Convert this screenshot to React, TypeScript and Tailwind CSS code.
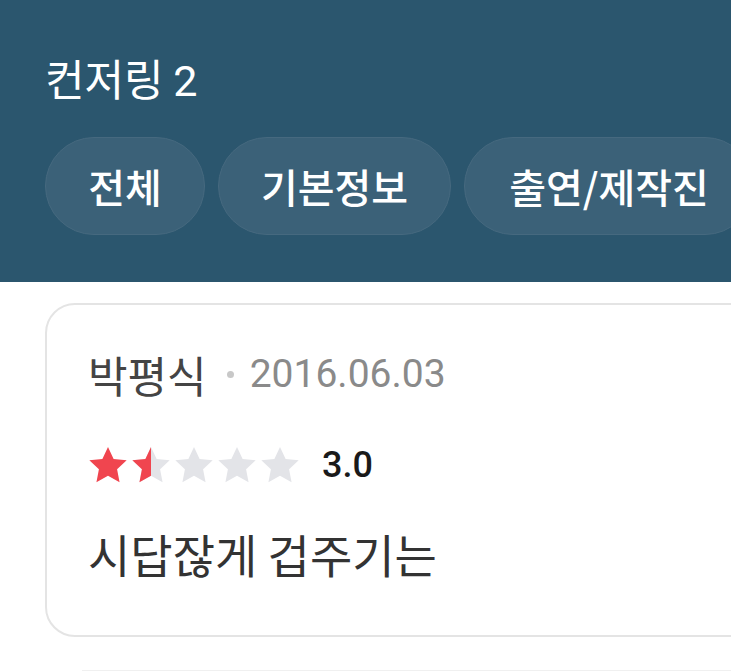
import React from "react";

const STAR =
  "M12 0.6l3.4 7.2 7.9.9-5.8 5.4 1.5 7.8L12 18l-7 3.9 1.5-7.8L.7 8.7l7.9-.9z";

const Star = ({ fill, id }: { fill: "full" | "half" | "empty"; id: string }) => (
  <svg width="40" height="38" viewBox="0 0 24 23" className="block">
    <defs>
      <clipPath id={id}>
        <rect x="0" y="0" width="12" height="23" />
      </clipPath>
    </defs>
    <path d={STAR} fill={fill === "full" ? "#f0454f" : "#e3e4e8"} />
    {fill === "half" && <path d={STAR} fill="#f0454f" clipPath={`url(#${id})`} />}
  </svg>
);

export default function App() {
  const font = { fontFamily: '"Noto Sans CJK KR", Roboto, sans-serif' };
  const roboto = { fontFamily: 'Roboto, "Noto Sans CJK KR", sans-serif' };
  return (
    <div className="w-[731px] h-[672px] overflow-hidden bg-white" style={font}>
      <div className="h-[282px] bg-[#2b566e] pl-[45px] pt-[51px] overflow-hidden">
        <div className="text-[43px] leading-[52px] font-normal text-white whitespace-nowrap">
          컨저링 <span style={roboto}>2</span>
        </div>
        <div className="flex gap-[13px] mt-[30px] w-[900px]">
          {[
            ["전체", "w-[160px]"],
            ["기본정보", "w-[233px]"],
            ["출연/제작진", "w-[290px]"],
          ].map(([t, w]) => (
            <div
              key={t}
              className={`${w} h-[98px] shrink-0 rounded-full bg-[#3b6178] border border-[#46697f] flex items-center justify-center text-white text-[40px] font-medium`}
            >
              {t}
            </div>
          ))}
        </div>
      </div>
      <div className="pl-[45px] pt-[21px]">
        <div className="w-[720px] h-[334px] rounded-[30px] border-2 border-[#e4e4e4] pl-[41px] pt-[38px]">
          <div className="flex items-center h-[62px] whitespace-nowrap">
            <span className="text-[43px] text-[#444]">박평식</span>
            <span className="ml-[20px] mr-[16px] w-[7px] h-[7px] rounded-full bg-[#c8c8c8]" />
            <span className="text-[39px] text-[#8a8a8a]" style={roboto}>
              2016.06.03
            </span>
          </div>
          <div className="flex items-center mt-[40px] h-[40px]">
            <div className="flex gap-[3px]">
              <Star fill="full" id="s1" />
              <Star fill="half" id="s2" />
              <Star fill="empty" id="s3" />
              <Star fill="empty" id="s4" />
              <Star fill="empty" id="s5" />
            </div>
            <span
              className="ml-[22px] text-[36px] font-medium text-[#1a1a1a]"
              style={roboto}
            >
              3.0
            </span>
          </div>
          <div className="mt-[38px] text-[46px] text-[#333] leading-[60px] whitespace-nowrap">
            시답잖게 겁주기는
          </div>
        </div>
        <div className="mt-[33px] ml-[37px] h-px bg-[#f0f0f0]" />
      </div>
    </div>
  );
}
